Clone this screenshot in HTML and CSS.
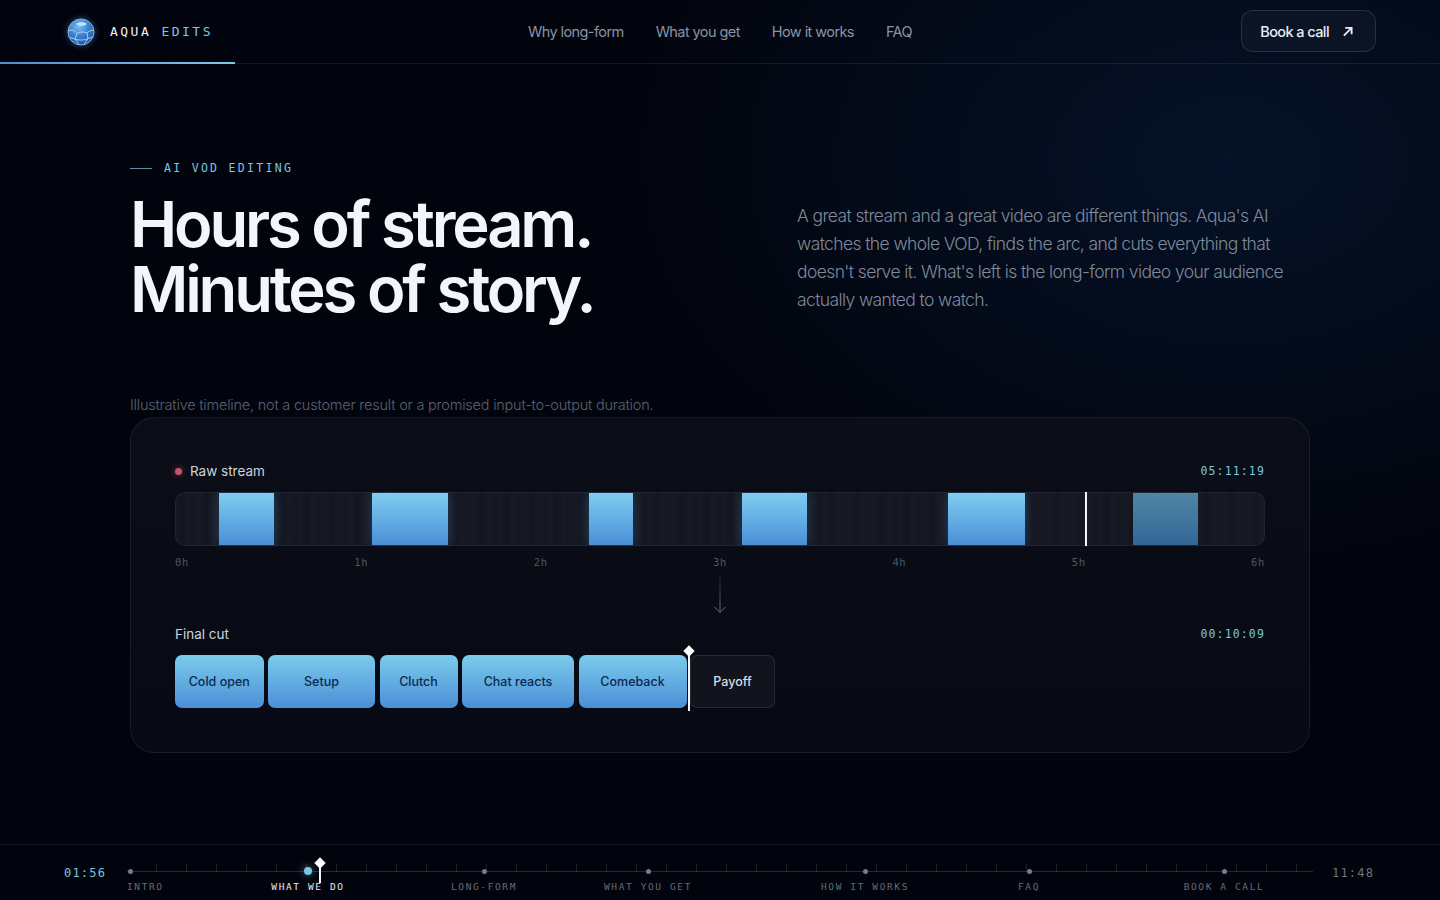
FILE: index.html
```html
<!DOCTYPE html>
<html lang="en">
<head>
  <meta charset="UTF-8" />
  <meta name="viewport" content="width=device-width, initial-scale=1.0"/>
  <title>Aqua Edits</title>
  <link rel="stylesheet" href="styles.css">
</head>
<body>

<!-- Top bar -->
<header class="topbar">
  <div class="brand">
    <svg class="globe" width="28" height="28" viewBox="0 0 28 28" fill="none" xmlns="http://www.w3.org/2000/svg">
      <defs>
        <radialGradient id="globe-fill" cx="42%" cy="28%" r="78%">
          <stop offset="0" stop-color="#7cc0f0"/>
          <stop offset="0.5" stop-color="#3a80d2"/>
          <stop offset="1" stop-color="#1c4f9c"/>
        </radialGradient>
      </defs>
      <circle cx="14" cy="14" r="13" fill="url(#globe-fill)" stroke="#9cc8ee" stroke-width="0.8"/>
      <path d="M9 6C12 3.500 17 3.500 20 6C17 8.500 12 8.500 9 6Z" fill="#c2e8fa"/>
      <path d="M1.500 13C5 11 8 13 10 15.500C13 13.500 17 13.500 20 15C22 13 24.500 12 26.500 12.500" stroke="#c4dff5" stroke-width="0.8"/>
      <path d="M10 15.500L8 21L12 26.500M20 15L21 20.500L17 26.500M8 21C11 22.500 18 22.500 21 20.500M8 21L3 19.500M21 20.500L25.500 19" stroke="#c4dff5" stroke-width="0.8"/>
    </svg>
    <span class="brand-name">AQUA <em>EDITS</em></span>
  </div>
  <nav class="nav">
    <a href="#">Why long-form</a>
    <a href="#">What you get</a>
    <a href="#">How it works</a>
    <a href="#">FAQ</a>
  </nav>
  <div class="topbar-end">
    <a class="call-button" href="#">
      Book a call
      <svg width="11" height="11" viewBox="0 0 12 12" fill="none" xmlns="http://www.w3.org/2000/svg">
        <path d="M2 10.500L10 2.500M3.500 2H10.500V9" stroke="currentColor" stroke-width="2"/>
      </svg>
    </a>
  </div>
  <div class="page-progress"></div>
</header>

<main class="main">
  <section class="hero">
    <div>
      <p class="eyebrow"><span class="eyebrow-line"></span>AI VOD EDITING</p>
      <h1>Hours of stream.<br>Minutes of story.</h1>
    </div>
    <p class="lead">A great stream and a great video are different things. Aqua's AI watches the whole VOD, finds the arc, and cuts everything that doesn't serve it. What's left is the long-form video your audience actually wanted to watch.</p>
  </section>

  <p class="note">Illustrative timeline, not a customer result or a promised input-to-output duration.</p>

  <section class="panel">
    <div class="row-head">
      <span class="row-title"><i class="rec-dot"></i>Raw stream</span>
      <span class="timecode">05:11:19</span>
    </div>
    <div class="raw-track">
      <span style="width:44px"></span>
      <span class="seg" style="width:55px"></span>
      <span style="width:98px"></span>
      <span class="seg" style="width:76px"></span>
      <span style="width:141px"></span>
      <span class="seg" style="width:44px"></span>
      <span style="width:109px"></span>
      <span class="seg" style="width:65px"></span>
      <span style="width:141px"></span>
      <span class="seg" style="width:77px"></span>
      <span style="width:108px"></span>
      <span class="seg dim" style="width:65px"></span>
      <span style="width:67px"></span>
      <i class="raw-head"></i>
    </div>
    <div class="hours">
      <span>0h</span><span>1h</span><span>2h</span><span>3h</span><span>4h</span><span>5h</span><span>6h</span>
    </div>

    <div class="down-arrow">
      <svg width="14" height="38" viewBox="0 0 14 38" fill="none" xmlns="http://www.w3.org/2000/svg">
        <path d="M7 0V36" stroke="url(#arrow-fade)" stroke-width="1"/>
        <path d="M1.500 31L7 36.500L12.500 31" stroke="#66707f" stroke-width="1"/>
        <defs>
          <linearGradient id="arrow-fade" x1="7" y1="0" x2="7" y2="36" gradientUnits="userSpaceOnUse">
            <stop offset="0" stop-color="#66707f" stop-opacity="0.2"/>
            <stop offset="1" stop-color="#66707f"/>
          </linearGradient>
        </defs>
      </svg>
    </div>

    <div class="row-head final-head">
      <span class="row-title">Final cut</span>
      <span class="timecode">00:10:09</span>
    </div>
    <div class="clips">
      <div class="clip" style="width:88.500px">Cold open</div>
      <div class="clip" style="width:107px">Setup</div>
      <div class="clip" style="width:78px">Clutch</div>
      <div class="clip" style="width:112px">Chat reacts</div>
      <div class="clip" style="width:108px">Comeback</div>
      <div class="clip clip-last" style="width:85px">Payoff</div>
      <i class="clip-head"></i>
    </div>
  </section>
</main>

<!-- Bottom scrubber -->
<footer class="scrubber">
  <span class="time time-now">01:56</span>
  <div class="rail">
    <div class="rail-line"></div>
    <div class="stop stop-first" style="left:3px"><i></i><span>INTRO</span></div>
    <div class="stop active" style="left:181px"><i></i><span>WHAT WE DO</span></div>
    <div class="stop" style="left:357px"><i></i><span>LONG-FORM</span></div>
    <div class="stop" style="left:521px"><i></i><span>WHAT YOU GET</span></div>
    <div class="stop" style="left:738px"><i></i><span>HOW IT WORKS</span></div>
    <div class="stop" style="left:902px"><i></i><span>FAQ</span></div>
    <div class="stop" style="left:1097px"><i></i><span>BOOK A CALL</span></div>
    <i class="rail-head"></i>
  </div>
  <span class="time">11:48</span>
</footer>

</body>
</html>
```

FILE: styles.css
```css
:root {
  --bg: #02040d;
  --aqua: #7cc4e0;
  --text: #e8edf5;
  --line: rgba(255,255,255,0.07);
  --mono: 'DejaVu Sans Mono', 'Liberation Mono', monospace;
}

* {
  box-sizing: border-box;
}

body {
  margin: 0;
  height: 100vh;
  overflow: hidden;
  display: flex;
  flex-direction: column;
  font-family: Inter, 'Noto Sans', sans-serif;
  color: var(--text);
  background:
    radial-gradient(ellipse 620px 420px at 1230px 160px, rgba(10,38,78,0.4), transparent),
    var(--bg);
}

/* top bar */
.topbar {
  position: relative;
  height: 64px;
  flex: none;
  display: grid;
  grid-template-columns: 1fr auto 1fr;
  align-items: center;
  padding: 0 64px;
  border-bottom: 1px solid var(--line);
}

.page-progress {
  position: absolute;
  left: 0;
  bottom: -1px;
  width: 235px;
  height: 2px;
  background: linear-gradient(to right, #4a8fd8, #7ec8e8);
}

.brand {
  display: flex;
  align-items: center;
  gap: 15px;
  padding-left: 3px;
}

.globe {
  filter: drop-shadow(0 0 3px rgba(90,160,230,0.5));
}

.brand-name {
  font-family: var(--mono);
  font-size: 13px;
  letter-spacing: 0.19em;
  color: #eef1f6;
}

.brand-name em {
  font-style: normal;
  color: var(--aqua);
}

.nav {
  display: flex;
  gap: 32px;
}

.nav a {
  color: #8a93a3;
  font-size: 14.5px;
  letter-spacing: -0.04em;
  text-decoration: none;
}

.topbar-end {
  display: flex;
  justify-content: flex-end;
}

.call-button {
  display: flex;
  align-items: center;
  gap: 13px;
  height: 42px;
  padding: 0 22px 0 18px;
  margin-top: -1px;
  border: 1px solid rgba(255,255,255,0.12);
  border-radius: 12px;
  background: rgba(255,255,255,0.03);
  color: var(--text);
  font-size: 14.5px;
  font-weight: 500;
  letter-spacing: -0.04em;
  text-decoration: none;
}

/* hero */
.main {
  flex: 1;
  padding: 0 130px;
}

.hero {
  display: grid;
  grid-template-columns: 667px 1fr;
  padding-top: 97px;
}

.eyebrow {
  display: flex;
  align-items: center;
  gap: 12px;
  margin: 0;
  height: 14px;
  font-family: var(--mono);
  font-size: 11.5px;
  letter-spacing: 0.2em;
  color: var(--aqua);
}

.eyebrow-line {
  width: 22px;
  height: 1px;
  background: #5b8ea8;
}

h1 {
  margin: 17px 0 0;
  font-size: 63.300px;
  line-height: 65px;
  font-weight: 600;
  letter-spacing: -0.05em;
  color: #f2f5fb;
}

.lead {
  margin: 41px 0 0;
  font-size: 17.5px;
  line-height: 28px;
  font-weight: 300;
  letter-spacing: -0.035em;
  color: #7f8a9b;
}

.note {
  margin: 73px 0 0;
  height: 22px;
  line-height: 20px;
  font-size: 14.5px;
  font-weight: 300;
  letter-spacing: -0.015em;
  color: #5a6373;
}

/* timeline panel */
.panel {
  height: 336px;
  padding: 43px 44px 0;
  border: 1px solid rgba(255,255,255,0.07);
  border-radius: 24px;
  background: linear-gradient(to bottom, #0b0e17, #070a14);
}

.row-head {
  display: flex;
  justify-content: space-between;
  align-items: center;
  height: 20px;
}

.row-title {
  display: flex;
  align-items: center;
  gap: 8px;
  font-size: 13.5px;
  color: #cdd3dd;
}

.rec-dot {
  width: 7px;
  height: 7px;
  border-radius: 50%;
  background: #c4546c;
  box-shadow: 0 0 6px rgba(196,84,108,0.6);
}

.timecode {
  font-family: var(--mono);
  font-size: 11.500px;
  letter-spacing: 0.1em;
  color: var(--aqua);
}

.raw-track {
  position: relative;
  display: flex;
  height: 54px;
  margin-top: 11px;
  border-radius: 10px;
  box-shadow: inset 0 0 0 1px rgba(255,255,255,0.05);
  background:
    repeating-linear-gradient(to right, rgba(255,255,255,0.025), rgba(255,255,255,0.005) 7px, rgba(255,255,255,0.025) 13px, rgba(255,255,255,0.01) 19px, rgba(255,255,255,0.025) 25px),
    #12151f;
  overflow: hidden;
}

.raw-track span {
  flex: none;
}

.seg {
  margin: 1px 0;
  background: linear-gradient(to bottom, #7fcdf0, #4a8fd6);
  box-shadow: 0 0 12px rgba(74,143,214,0.35);
}

.seg.dim {
  background: linear-gradient(to bottom, #4f86a3, #336699);
  box-shadow: none;
}

.raw-head {
  position: absolute;
  left: 910px;
  top: 0;
  bottom: 0;
  width: 2px;
  background: #f3f5f8;
}

.hours {
  display: flex;
  justify-content: space-between;
  margin-top: 10px;
  font-family: var(--mono);
  font-size: 10.5px;
  letter-spacing: 0.06em;
  color: #4e5664;
}

.down-arrow {
  display: flex;
  justify-content: center;
  height: 38px;
  margin-top: 8px;
}

.final-head {
  margin-top: 10px;
}

.clips {
  position: relative;
  display: flex;
  gap: 4.500px;
  margin-top: 11px;
  height: 53px;
}

.clip {
  display: flex;
  align-items: center;
  justify-content: center;
  flex: none;
  border-radius: 7px;
  background: linear-gradient(to bottom, #7ccbec, #4a8fd6);
  color: #0c2a4e;
  font-size: 12.5px;
  font-weight: 500;
}

.clip-last {
  margin-left: -1px;
  background: #11141d;
  border: 1px solid rgba(255,255,255,0.1);
  color: #d8dde6;
}

.clip-head {
  position: absolute;
  left: 513px;
  top: -8px;
  width: 2px;
  height: 64px;
  background: #f3f5f8;
}

.clip-head::before {
  content: "";
  position: absolute;
  left: -3px;
  top: 0;
  width: 8px;
  height: 8px;
  background: #fff;
  transform: rotate(45deg);
}

/* bottom scrubber */
.scrubber {
  flex: none;
  display: flex;
  align-items: flex-start;
  height: 56px;
  padding: 0 64px;
  border-top: 1px solid var(--line);
}

.time {
  flex: none;
  width: 44px;
  margin-top: 21px;
  font-family: var(--mono);
  font-size: 12px;
  letter-spacing: 0.1em;
  color: #6b7482;
}

.time-now {
  width: 63px;
  color: var(--aqua);
}

.rail {
  position: relative;
  flex: 1;
  margin-right: 19px;
  height: 55px;
}

.rail-line {
  position: absolute;
  left: 0;
  right: 0;
  top: 19px;
  height: 8px;
  background:
    linear-gradient(rgba(255,255,255,0.14), rgba(255,255,255,0.14)) bottom / 100% 1px no-repeat,
    repeating-linear-gradient(to right, transparent 0 29px, rgba(255,255,255,0.11) 29px 30px);
}

.stop {
  position: absolute;
  top: 24px;
  width: 0;
  display: flex;
  flex-direction: column;
  align-items: center;
}

.stop i {
  flex: none;
  width: 5px;
  height: 5px;
  border-radius: 50%;
  background: #757d8a;
}

.stop span {
  flex: none;
  margin-top: 7px;
  font-family: var(--mono);
  font-size: 9.500px;
  letter-spacing: 0.17em;
  white-space: nowrap;
  color: #646c79;
}

.stop-first {
  align-items: flex-start;
}

.stop-first i {
  margin-left: -2px;
}

.stop-first span {
  margin-left: -3px;
}

.stop.active {
  top: 22px;
}

.stop.active i {
  width: 8px;
  height: 8px;
  background: var(--aqua);
  box-shadow: 0 0 8px rgba(126,200,232,0.6);
}

.stop.active span {
  color: #e6eaf0;
  margin-top: 6px;
}

.rail-head {
  position: absolute;
  left: 192px;
  top: 14px;
  width: 2px;
  height: 24px;
  background: #f3f5f8;
}

.rail-head::before {
  content: "";
  position: absolute;
  left: -3px;
  top: 0;
  width: 8px;
  height: 8px;
  background: #fff;
  transform: rotate(45deg);
}
```
